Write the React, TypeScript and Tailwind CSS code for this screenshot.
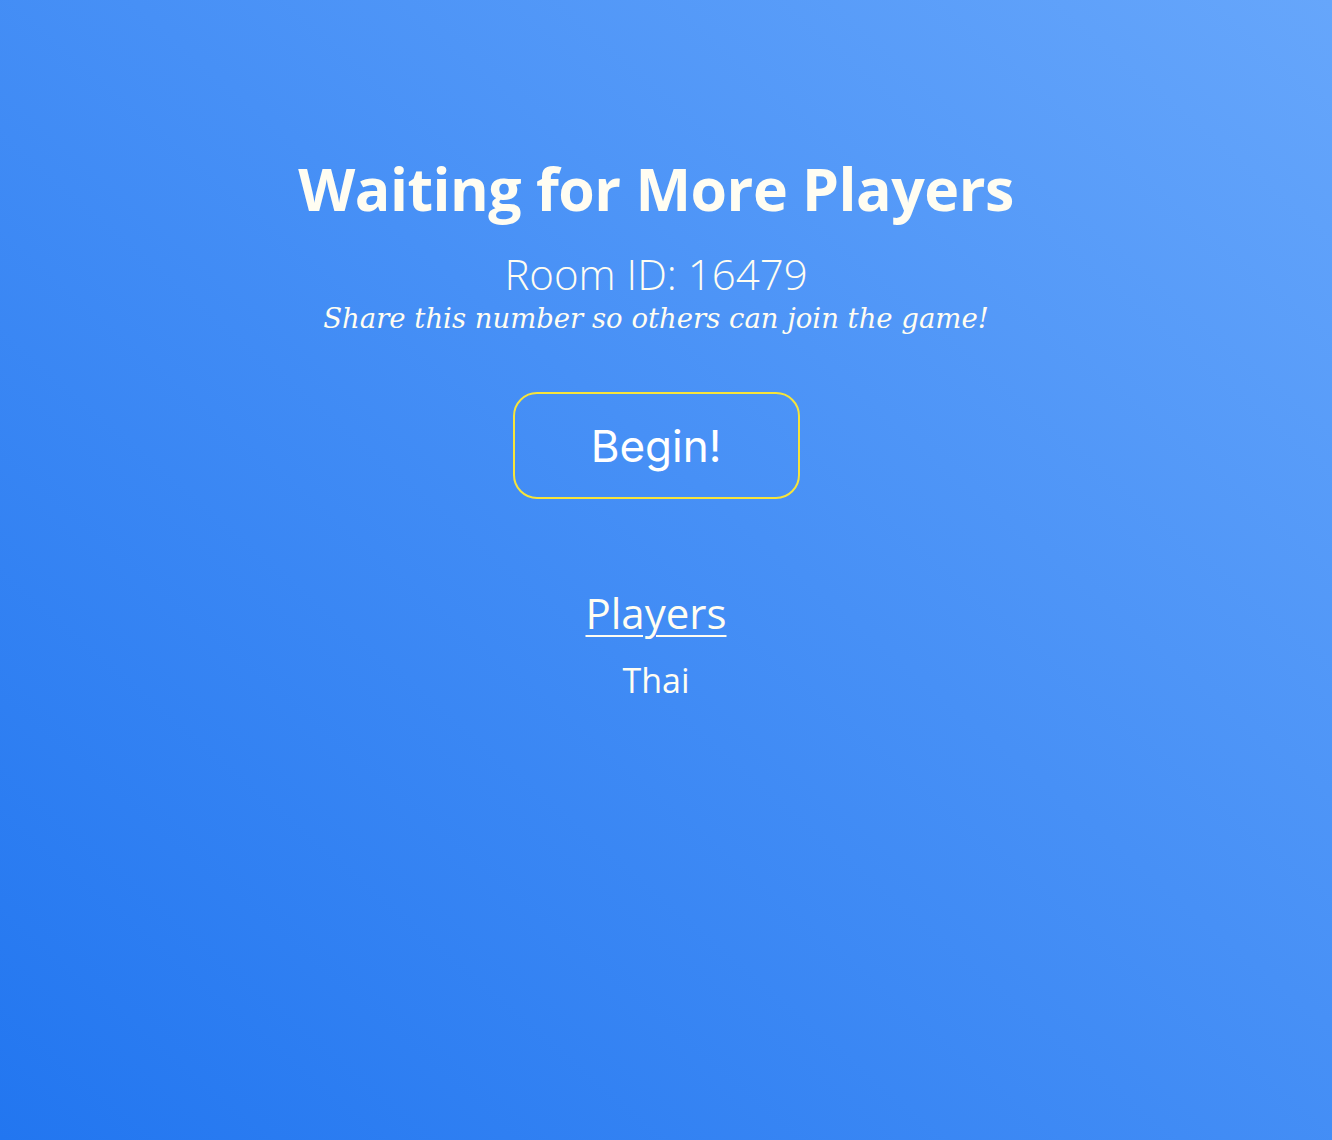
export default function App() {
  return (
    <div className="min-h-[1140px] w-full bg-[linear-gradient(to_top_right,#2276f0_0%,#4790f6_55%,#66a6fb_100%)] text-[#fffdf2]">
      <div className="flex flex-col items-center pr-[20px] pt-[150px]">
        <h1 className="font-['Open_Sans',sans-serif] text-[59px] font-bold leading-[76px] tracking-[-0.5px]">
          Waiting for More Players
        </h1>
        <div className="mt-[24px] font-['Open_Sans',sans-serif] text-[42px] font-light leading-[48px]">
          Room ID: 16479
        </div>
        <div className="mt-[3px] font-['DejaVu_Serif',serif] text-[27.5px] italic leading-[34px]">
          Share this number so others can join the game!
        </div>
        <button
          type="button"
          className="mt-[57px] flex h-[107px] w-[287px] items-center justify-center rounded-[24px] border-2 border-[#f7e43a] font-['Inter',sans-serif] text-[44px] text-white"
        >
          Begin!
        </button>
        <div className="mt-[88px] font-['Open_Sans',sans-serif] text-[42px] leading-[52px] underline decoration-2 underline-offset-[6px]">
          Players
        </div>
        <div className="mt-[18px] font-['Open_Sans',sans-serif] text-[34px] leading-[46px]">
          Thai
        </div>
      </div>
    </div>
  );
}
